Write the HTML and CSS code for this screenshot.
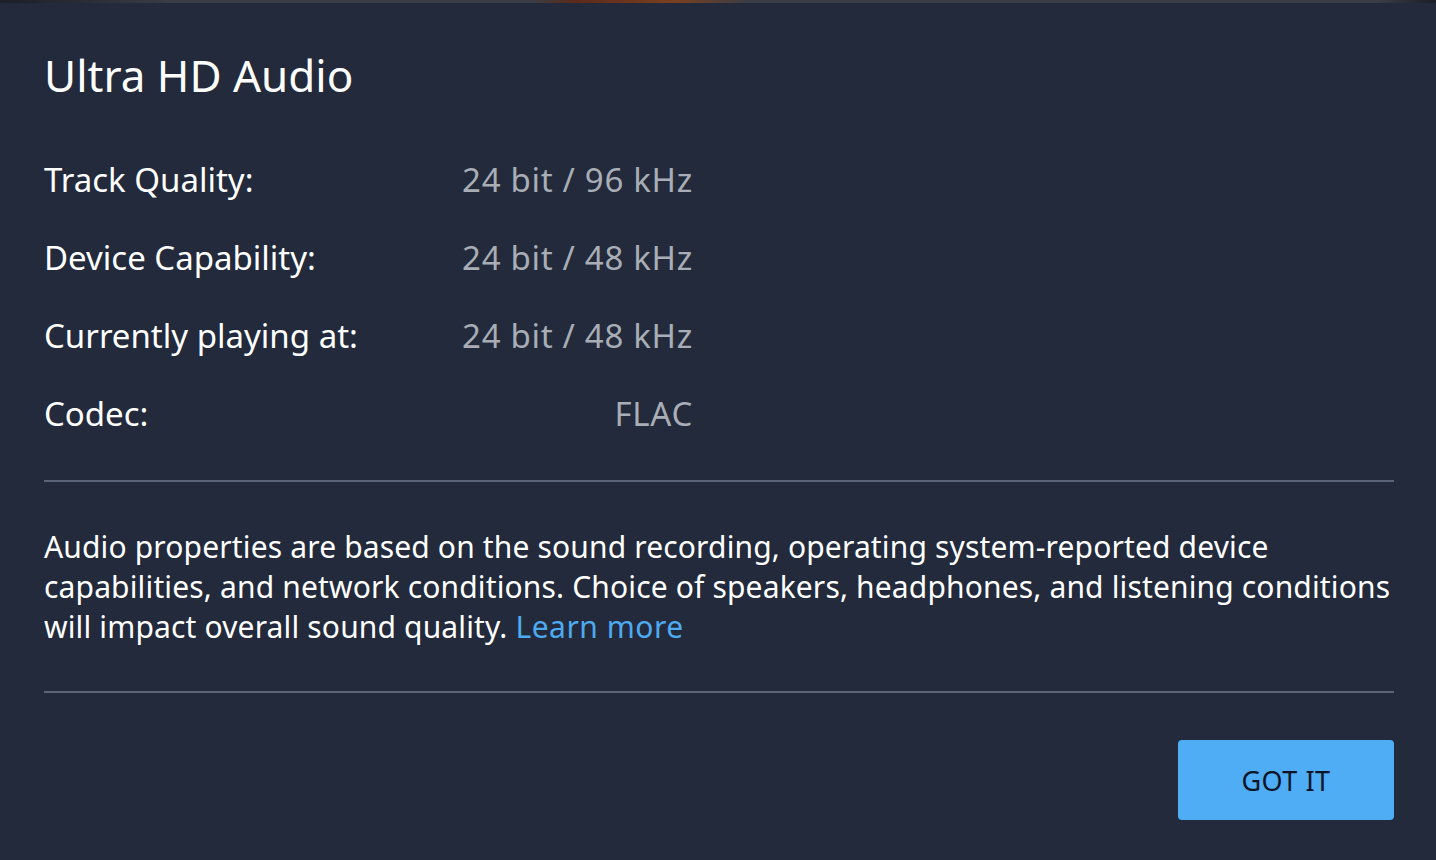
FILE: index.html
```html
<!DOCTYPE html>
<html lang="en">
<head>
<meta charset="utf-8">
<title>Ultra HD Audio</title>
<link rel="stylesheet" href="styles.css">
</head>
<body>
<div class="backdrop"></div>
<div class="dialog">
  <h1 class="title">Ultra HD Audio</h1>
  <div class="props">
    <div class="label">Track Quality:</div><div class="value">24 bit / 96 kHz</div>
    <div class="label">Device Capability:</div><div class="value">24 bit / 48 kHz</div>
    <div class="label">Currently playing at:</div><div class="value">24 bit / 48 kHz</div>
    <div class="label">Codec:</div><div class="value">FLAC</div>
  </div>
  <hr class="sep">
  <p class="note">Audio properties are based on the sound recording, operating system-reported device capabilities, and network conditions. Choice of speakers, headphones, and listening conditions will impact overall sound quality. <a class="link" href="#">Learn more</a></p>
  <hr class="sep">
  <div class="actions">
    <button class="btn">GOT IT</button>
  </div>
</div>
</body>
</html>
```
FILE: styles.css
```css
html, body {
  margin: 0;
  padding: 0;
  background: #222a3b;
  width: 1436px;
  height: 860px;
  overflow: hidden;
}
body {
  font-family: "Noto Sans", "Open Sans", sans-serif;
  color: #ffffff;
}
.backdrop {
  height: 3px;
  background: linear-gradient(90deg, #1b1e24 0%, #3a3d44 12%, #3a3d44 37%, #5a2a1a 40%, #7a4020 47%, #3a3d44 52%, #3a3d44 96%, #1b1e24 100%);
}
.dialog {
  padding: 0 42px 0 44px;
}
.title {
  margin: 0;
  padding-top: 45px;
  font-size: 44px;
  font-weight: 400;
  line-height: 54px;
  letter-spacing: 0;
}
.props {
  display: grid;
  grid-template-columns: 380px 269px;
  grid-auto-rows: 78px;
  margin-top: 38px;
  font-size: 33px;
  align-items: center;
}
.label {
  color: #ffffff;
}
.value {
  color: #a8adb6;
  text-align: right;
  letter-spacing: 0.7px;
}
.sep {
  border: 0;
  height: 2px;
  background: #5b6477;
  margin: 0;
}
.props + .sep {
  margin-top: 28px;
}
.note {
  margin: 45px 0 44px;
  font-size: 30px;
  line-height: 40px;
  letter-spacing: 0.15px;
}
.link {
  color: #4eaaf0;
  text-decoration: none;
  letter-spacing: 0.5px;
}
.actions {
  display: flex;
  justify-content: flex-end;
  padding-top: 47px;
}
.btn {
  width: 216px;
  height: 80px;
  border: 0;
  border-radius: 4px;
  background: #4fadf5;
  color: #0b1525;
  font-family: "Noto Sans", "Open Sans", sans-serif;
  font-size: 27px;
  letter-spacing: 0.5px;
}
```
